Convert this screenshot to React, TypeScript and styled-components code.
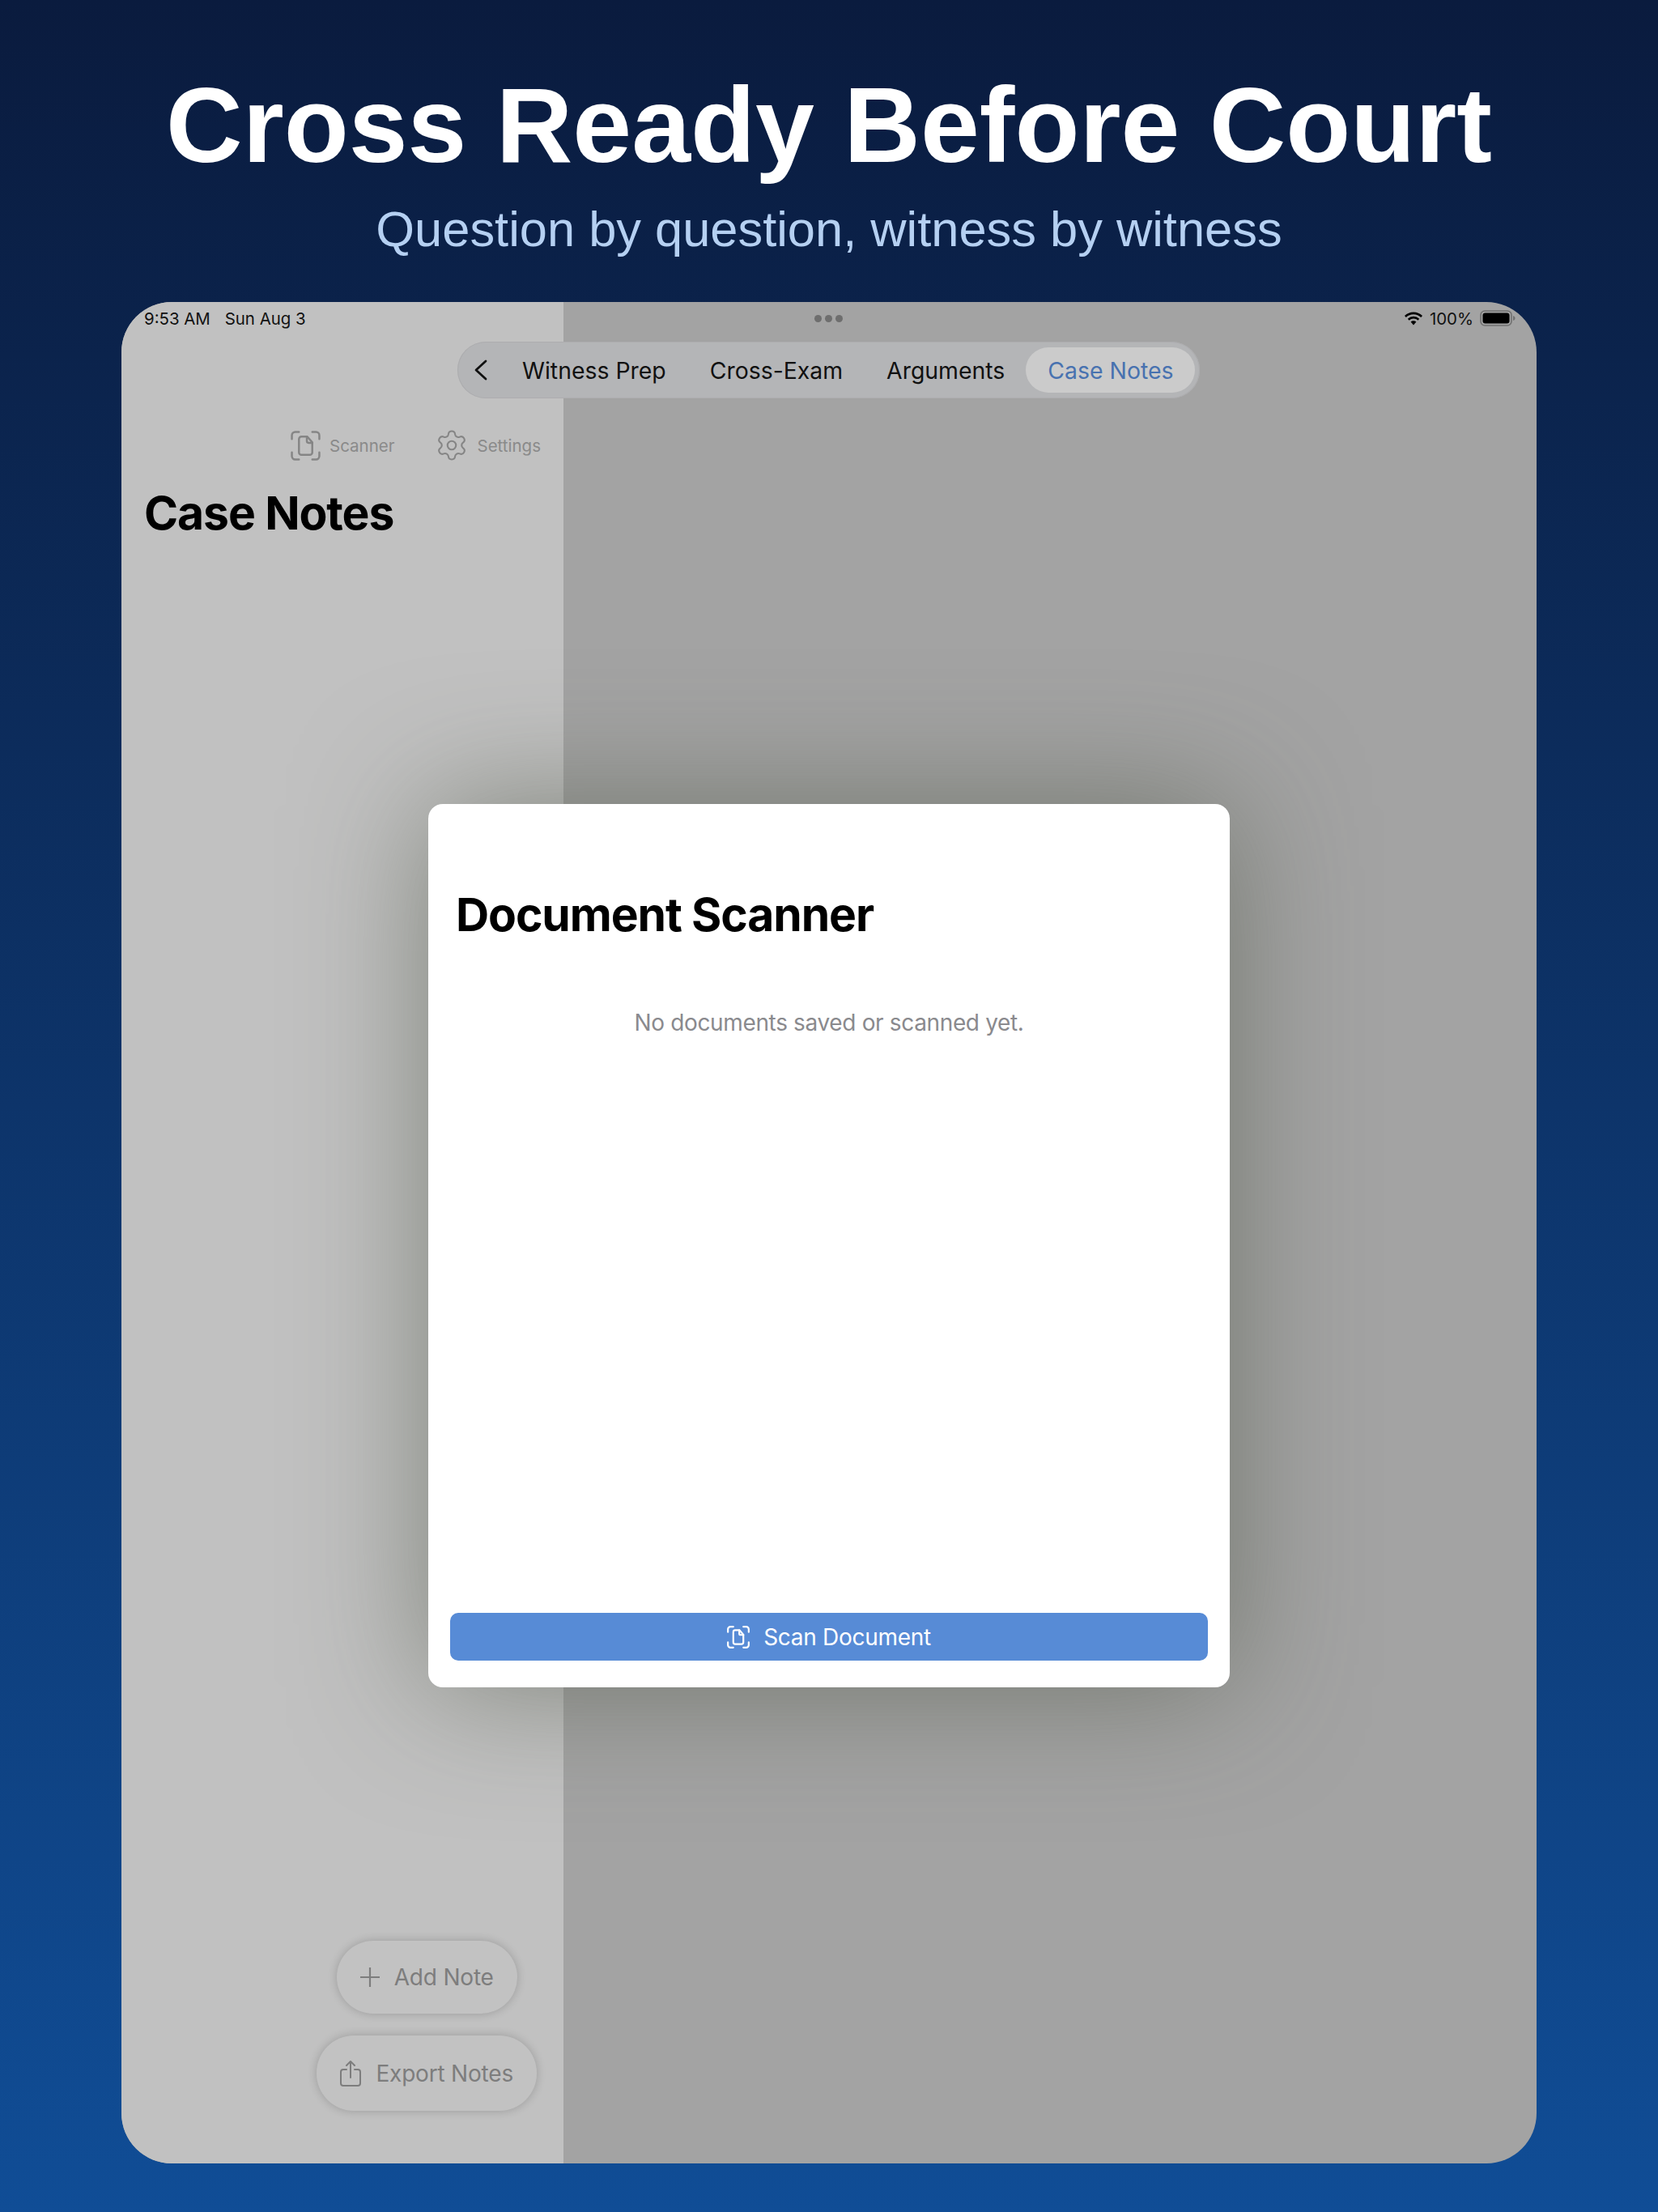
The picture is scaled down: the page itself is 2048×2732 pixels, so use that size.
import * as React from 'react'
import styled, {createGlobalStyle} from 'styled-components'
import {Settings} from 'lucide-react'

const GlobalStyle = createGlobalStyle`
  html, body {
    margin: 0;
    padding: 0;
  }
  body {
    width: 2048px;
    height: 2732px;
    overflow: hidden;
    font-family: Inter, "Liberation Sans", sans-serif;
  }
`

const Page = styled.div`
  width: 2048px;
  height: 2732px;
  display: flex;
  flex-direction: column;
  align-items: center;
  background: linear-gradient(180deg, #0a1b3e 0%, #104d96 100%);
`

const Hero = styled.header`
  height: 373px;
  flex: none;
  display: flex;
  flex-direction: column;
  align-items: center;
  font-family: "Liberation Sans", Arial, sans-serif;
`

const Headline = styled.h1`
  margin: 80px 0 0;
  font-size: 131px;
  line-height: 150px;
  font-weight: 700;
  color: #fff;
`

const Subline = styled.p`
  margin: 18px 0 0;
  font-size: 61.4px;
  line-height: 70px;
  font-weight: 400;
  color: #b5d0f2;
`

const Device = styled.div`
  position: relative;
  width: 1748px;
  height: 2299px;
  flex: none;
  overflow: hidden;
  border-radius: 62px;
  display: grid;
  grid-template-columns: 546px 1fr;
  background: #a3a3a3;
`

const Sidebar = styled.aside`
  background: #c1c1c1;
  display: flex;
  flex-direction: column;
  padding: 157px 33px 65px 28px;
`

const ToolRow = styled.div`
  display: flex;
  justify-content: flex-end;
  align-items: center;
  gap: 49px;
  height: 40px;
  margin-right: -5px;
`

const Tool = styled.div`
  display: flex;
  align-items: center;
  gap: 11px;
  font-size: 20.5px;
  color: #8a8a8a;
  svg {
    display: block;
    flex: none;
  }
`

const SideTitle = styled.h2`
  margin: 29px 0 0;
  font-size: 57px;
  line-height: 70px;
  font-weight: 700;
  letter-spacing: -1.1px;
  color: #000;
`

const SideActions = styled.div`
  margin-top: auto;
  align-self: flex-end;
  display: flex;
  flex-direction: column;
  align-items: center;
  gap: 27px;
`

const Pill = styled.div<{$height: number}>`
  height: ${_ => _.$height}px;
  padding: 0 29px;
  display: flex;
  align-items: center;
  gap: 18px;
  border-radius: 46px;
  background: #c2c2c2;
  box-shadow: 0 0 12px rgba(0, 0, 0, 0.2);
  font-size: 28px;
  letter-spacing: -0.2px;
  color: #7d7d7d;
  svg {
    display: block;
    flex: none;
  }
`

const StatusBar = styled.div`
  position: absolute;
  top: 0;
  left: 0;
  right: 0;
  height: 40px;
  padding: 0 26px 0 28px;
  display: flex;
  align-items: center;
  justify-content: space-between;
  font-size: 20.4px;
  color: #111;
`

const StatusGroup = styled.div<{$gap: number}>`
  display: flex;
  align-items: center;
  gap: ${_ => _.$gap}px;
`

const DragDots = styled.div`
  position: absolute;
  top: 16px;
  left: 856px;
  display: flex;
  gap: 4px;
`

const Dot = styled.span`
  width: 9px;
  height: 9px;
  border-radius: 50%;
  background: #6e6e6e;
`

const TabBar = styled.nav`
  position: absolute;
  top: 49px;
  left: 415px;
  width: 917px;
  height: 70px;
  box-sizing: border-box;
  padding: 0 6px 0 20px;
  display: flex;
  align-items: center;
  border-radius: 35px;
  background: #b4b5b7;
  box-shadow: inset 0 0 0 1px #adadaf;
`

const Chevron = styled.svg`
  display: block;
  flex: none;
  margin-right: 42px;
`

const Tab = styled.div<{$active?: boolean; $after?: number}>`
  height: 56px;
  display: flex;
  align-items: center;
  flex: none;
  white-space: nowrap;
  padding: 0 ${_ => (_.$active ? '27px' : '0')};
  margin-right: ${_ => _.$after ?? 0}px;
  border-radius: 28px;
  font-size: 28.4px;
  color: ${_ => (_.$active ? '#4872b0' : '#111')};
  background: ${_ => (_.$active ? '#cbcbcb' : 'transparent')};
`

const Scrim = styled.div`
  position: absolute;
  inset: 0;
  padding: 620px 379px 588px;
  display: flex;
  box-sizing: border-box;
`

const Sheet = styled.section`
  flex: 1;
  display: flex;
  flex-direction: column;
  padding: 0 27px 33px;
  background: #fff;
  border-radius: 18px;
  box-shadow: 0 0 160px rgba(80, 87, 70, 0.58);
`

const SheetTitle = styled.h2`
  margin: 102px 0 0 7px;
  font-size: 57px;
  line-height: 70px;
  font-weight: 700;
  letter-spacing: -1.1px;
  color: #000;
`

const EmptyNote = styled.p`
  margin: 78px 0 0;
  text-align: center;
  font-size: 28px;
  line-height: 40px;
  letter-spacing: -0.35px;
  color: #8a8a8e;
`

const ScanButton = styled.div`
  margin-top: auto;
  height: 59px;
  display: flex;
  align-items: center;
  justify-content: center;
  gap: 17px;
  border-radius: 10px;
  background: #578bd6;
  font-size: 28px;
  letter-spacing: -0.3px;
  color: #fff;
  svg {
    display: block;
    flex: none;
  }
`

const ScanIcon: React.FC<{size: number; color: string; width?: number}> = ({
  size,
  color,
  width = 2.4
}) => (
  <svg width={size} height={size} viewBox="0 0 36 36" fill="none" stroke={color} strokeWidth={width} strokeLinecap="round" strokeLinejoin="round">
    <path d="M1.500 10V5.500a4 4 0 0 1 4-4H10" />
    <path d="M26 1.500h4.500a4 4 0 0 1 4 4V10" />
    <path d="M34.500 26v4.500a4 4 0 0 1-4 4H26" />
    <path d="M10 34.500H5.500a4 4 0 0 1-4-4V26" />
    <path d="M10 10a3 3 0 0 1 3-3h7l6 7v12a3 3 0 0 1-3 3H13a3 3 0 0 1-3-3z" />
    <path d="M19.500 7v5.500a2 2 0 0 0 2 2H26" />
  </svg>
)

const App: React.FC = () => (
  <Page>
    <GlobalStyle />
    <Hero>
      <Headline>Cross Ready Before Court</Headline>
      <Subline>Question by question, witness by witness</Subline>
    </Hero>
    <Device>
      <Sidebar>
        <ToolRow>
          <Tool>
            <ScanIcon size={37} color="#858585" />
            Scanner
          </Tool>
          <Tool>
            <Settings size={42} color="#858585" strokeWidth={1.2} />
            Settings
          </Tool>
        </ToolRow>
        <SideTitle>Case Notes</SideTitle>
        <SideActions>
          <Pill $height={90}>
            <svg width="24" height="24" viewBox="0 0 24 24" fill="none" stroke="#7d7d7d" strokeWidth="2.2">
              <path d="M12 0v24M0 12h24" />
            </svg>
            Add Note
          </Pill>
          <Pill $height={93}>
            <svg width="26" height="32" viewBox="0 0 26 32" fill="none" stroke="#7d7d7d" strokeWidth="2" strokeLinecap="round" strokeLinejoin="round">
              <path d="M8 11H4a3 3 0 0 0-3 3v14a3 3 0 0 0 3 3h18a3 3 0 0 0 3-3V14a3 3 0 0 0-3-3h-4" />
              <path d="M13 21V1M8 6l5-5 5 5" />
            </svg>
            Export Notes
          </Pill>
        </SideActions>
      </Sidebar>
      <div />
      <StatusBar>
        <StatusGroup $gap={18}>
          <span>9:53 AM</span>
          <span>Sun Aug 3</span>
        </StatusGroup>
        <StatusGroup $gap={8}>
          <svg width="24" height="17" viewBox="0 0 24 17" fill="#000">
            <path d="M12 3.200c3.600 0 6.800 1.400 9.200 3.700l1.800-2A16 16 0 0 0 12 .4 16 16 0 0 0 1 4.900l1.800 2A13.200 13.200 0 0 1 12 3.200z" />
            <path d="M12 8.600c2.100 0 4 .8 5.400 2.100l1.800-2A10.600 10.600 0 0 0 12 5.800a10.600 10.600 0 0 0-7.200 2.900l1.800 2A8 8 0 0 1 12 8.600z" />
            <path d="M12 11.200c-1.300 0-2.500.5-3.400 1.300L12 16.500l3.400-4a5 5 0 0 0-3.400-1.300z" />
          </svg>
          <span>100%</span>
          <svg width="44" height="20" viewBox="0 0 44 20">
            <rect x="1" y="1" width="38" height="18" rx="5" fill="none" stroke="#707070" strokeWidth="1.6" />
            <rect x="3.500" y="3.500" width="33" height="13" rx="3" fill="#000" />
            <path d="M41 7c1.500.5 2.500 1.500 2.500 3s-1 2.500-2.500 3z" fill="#707070" />
          </svg>
        </StatusGroup>
      </StatusBar>
      <DragDots>
        <Dot />
        <Dot />
        <Dot />
      </DragDots>
      <TabBar>
        <Chevron width="18" height="26" viewBox="0 0 18 26" fill="none" stroke="#111" strokeWidth="2.8" strokeLinecap="round" strokeLinejoin="round">
          <path d="M15 2L3 13l12 11" />
        </Chevron>
        <Tab $after={54}>Witness Prep</Tab>
        <Tab $after={54}>Cross-Exam</Tab>
        <Tab $after={26}>Arguments</Tab>
        <Tab $active>Case Notes</Tab>
      </TabBar>
      <Scrim>
        <Sheet>
          <SheetTitle>Document Scanner</SheetTitle>
          <EmptyNote>No documents saved or scanned yet.</EmptyNote>
          <ScanButton>
            <ScanIcon size={28} color="#fff" width={2.8} />
            Scan Document
          </ScanButton>
        </Sheet>
      </Scrim>
    </Device>
  </Page>
)

export default App
